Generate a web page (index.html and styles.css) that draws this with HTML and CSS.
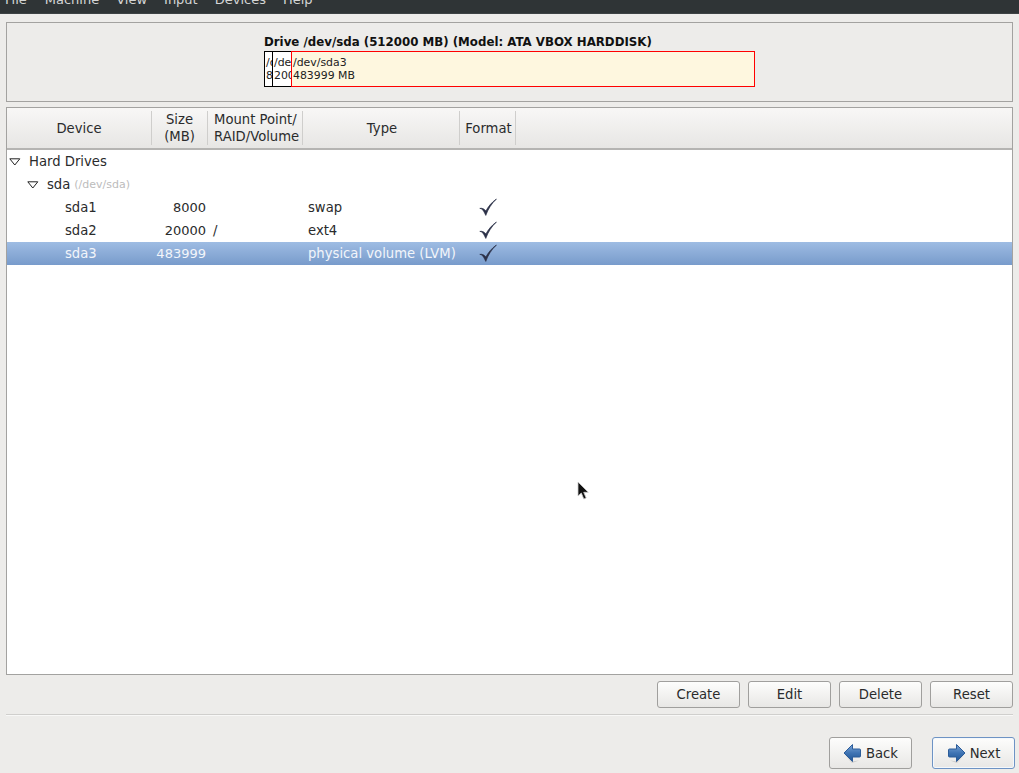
FILE: index.html
```html
<!DOCTYPE html>
<html lang="en">
<head>
<meta charset="utf-8">
<title>Partitioning</title>
<link rel="stylesheet" href="styles.css">
</head>
<body>
<svg class="defs" width="0" height="0" aria-hidden="true">
  <defs>
    <linearGradient id="arrowFill" x1="0" y1="0" x2="0" y2="1">
      <stop offset="0" stop-color="#7ba4d6"/>
      <stop offset="0.5" stop-color="#3f74b4"/>
      <stop offset="1" stop-color="#1f5596"/>
    </linearGradient>
    <symbol id="check" viewBox="0 0 18 18">
      <path d="M.8 10.400 C2.800 10.400 4.400 12.200 5.600 15 L6.800 17.400 C9 11.200 12.600 5.400 17.400 1 C12.600 4.400 9.200 8.600 6.900 13 C5.600 11.200 3.400 9.800 .8 10.400 Z" fill="#2b3048" stroke="#2b3048" stroke-width=".7"/>
    </symbol>
  </defs>
</svg>
<header class="menubar">
  <span class="menu m-file">File</span>
  <span class="menu m-machine">Machine</span>
  <span class="menu m-view">View</span>
  <span class="menu m-input">Input</span>
  <span class="menu m-devices">Devices</span>
  <span class="menu m-help">Help</span>
</header>
<main class="window">
  <section class="drive-panel">
    <div class="drive">
      <div class="drive-title">Drive /dev/sda (512000 MB) (Model: ATA VBOX HARDDISK)</div>
      <div class="drive-bar">
        <div class="seg seg-a">/dev/sda1<br>8000 MB</div>
        <div class="seg seg-b">/dev/sda2<br>20000 MB</div>
        <div class="seg seg-c">/dev/sda3<br>483999 MB</div>
      </div>
    </div>
  </section>
  <section class="tree">
    <div class="thead">
      <div class="th">Device</div>
      <div class="th">Size<br>(MB)</div>
      <div class="th th-left">Mount Point/<br>RAID/Volume</div>
      <div class="th th-shift">Type</div>
      <div class="th th-shift">Format</div>
      <div class="th th-fill"></div>
    </div>
    <div class="row">
      <div class="cell cell-device lvl0"><svg class="tri" width="12" height="8" viewBox="0 0 12 8"><path d="M.8.8h10L5.8 7z" fill="#fff" stroke="#222" stroke-width="1"/></svg>Hard Drives</div>
    </div>
    <div class="row">
      <div class="cell cell-device lvl1"><svg class="tri" width="12" height="8" viewBox="0 0 12 8"><path d="M.8.8h10L5.8 7z" fill="#fff" stroke="#222" stroke-width="1"/></svg>sda <small class="path">(/dev/sda)</small></div>
    </div>
    <div class="row">
      <div class="cell cell-device lvl2">sda1</div>
      <div class="cell cell-size">8000</div>
      <div class="cell cell-mount"></div>
      <div class="cell cell-type">swap</div>
      <div class="cell cell-format"><svg class="check"><use href="#check"/></svg></div>
    </div>
    <div class="row">
      <div class="cell cell-device lvl2">sda2</div>
      <div class="cell cell-size">20000</div>
      <div class="cell cell-mount">/</div>
      <div class="cell cell-type">ext4</div>
      <div class="cell cell-format"><svg class="check"><use href="#check"/></svg></div>
    </div>
    <div class="row selected">
      <div class="cell cell-device lvl2">sda3</div>
      <div class="cell cell-size">483999</div>
      <div class="cell cell-mount"></div>
      <div class="cell cell-type">physical volume (LVM)</div>
      <div class="cell cell-format"><svg class="check"><use href="#check"/></svg></div>
    </div>
  </section>
  <div class="actions">
    <button class="btn">Create</button>
    <button class="btn">Edit</button>
    <button class="btn">Delete</button>
    <button class="btn">Reset</button>
  </div>
  <hr class="separator">
  <nav class="nav">
    <button class="btn btn-nav">
      <svg width="19" height="21" viewBox="0 0 19 21"><path d="M1 11 9 18.500 16 17.500 9 20z" fill="#bdbcba" opacity=".7"/><path d="M1 10 9.500 1.500v4.500h7a1 1 0 0 1 1 1v6a1 1 0 0 1-1 1h-7v4.500z" fill="url(#arrowFill)" stroke="#2c5c99" stroke-width="1"/></svg>
      Back
    </button>
    <button class="btn btn-nav btn-focus">
      <svg width="19" height="21" viewBox="0 0 19 21"><path d="M18 11 10 18.500 3 17.500 10 20z" fill="#bdbcba" opacity=".7"/><path d="M18 10 9.500 1.500v4.500h-7a1 1 0 0 0-1 1v6a1 1 0 0 0 1 1h7v4.500z" fill="url(#arrowFill)" stroke="#2c5c99" stroke-width="1"/></svg>
      Next
    </button>
  </nav>
</main>
<svg class="cursor" width="14" height="20" viewBox="0 0 14 20" aria-hidden="true"><path d="M1 1v14l3.300-3 2.500 6 2.400-1-2.500-5.700h4.600z" fill="#111" stroke="#ccc" stroke-width=".8"/></svg>
</body>
</html>
```

FILE: styles.css
```css
* { box-sizing: border-box; }
html, body { margin: 0; height: 100%; }
body {
  position: relative;
  width: 1019px;
  height: 773px;
  overflow: hidden;
  background: #edecea;
  color: #2a2b2c;
  font-family: "DejaVu Sans", sans-serif;
  font-size: 13.200px;
}
.defs { position: absolute; }

.menubar {
  display: flex;
  align-items: flex-start;
  height: 14px;
  overflow: hidden;
  background: #2f3436;
  border-bottom: 1px solid #3d4244;
  color: #d4d5d5;
  font-size: 13px;
  line-height: 16px;
}
.menu { display: block; margin-top: -8px; }
.m-file { margin-left: 5px; }
.m-machine { margin-left: 18px; }
.m-view { margin-left: 17px; }
.m-input { margin-left: 17px; }
.m-devices { margin-left: 17px; }
.m-help { margin-left: 17px; }

.window {
  display: flex;
  flex-direction: column;
  height: 759px;
  padding: 8px 6px 0;
}

.drive-panel {
  display: flex;
  height: 80px;
  padding-left: 257px;
  border: 1px solid #a3a2a0;
}
.drive { width: 491px; padding-top: 11px; }
.drive-title {
  color: #111;
  font-size: 11.800px;
  font-weight: 700;
  line-height: 16px;
  white-space: nowrap;
}
.drive-bar {
  display: flex;
  height: 36px;
  margin-top: 1px;
  color: #222;
  font-size: 10.900px;
  line-height: 13px;
}
.seg {
  overflow: hidden;
  padding: 4px 0 0 1px;
  border: 1px solid #000;
  white-space: nowrap;
  background: #fff;
}
.seg-a { width: 9px; }
.seg-b { width: 20px; margin-left: -1px; }
.seg-c {
  flex: 1;
  margin-left: -1px;
  border-color: #f00;
  background: #fef7df;
}

.tree {
  display: flex;
  flex-direction: column;
  height: 568px;
  margin-top: 5px;
  background: #fff;
  border: 1px solid #a3a2a0;
}
.thead {
  display: grid;
  grid-template-columns: 145px 56px 95px 157px 56px 1fr;
  height: 42px;
  padding: 3px 0 4px;
  background: linear-gradient(#f8f7f6, #e7e6e4);
  border-bottom: 2px solid #b5b4b2;
  line-height: 17px;
  text-align: center;
}
.th {
  display: flex;
  align-items: center;
  justify-content: center;
  border-right: 1px solid #cfcecc;
}
.th-left { justify-content: flex-start; padding-left: 6px; text-align: left; }
.th-shift { padding-left: 2px; }
.th-fill { border-right: 0; }

.row {
  display: grid;
  grid-template-columns: 145px 56px 95px 157px 56px 1fr;
  height: 23px;
  align-items: center;
  line-height: 23px;
  white-space: nowrap;
}
.row.selected {
  background: linear-gradient(#9ebce3, #789bcb);
  color: #f2f5fa;
}
.cell { display: flex; align-items: center; height: 23px; }
.lvl0 { padding-left: 2px; gap: 8px; grid-column: 1 / 4; }
.lvl1 { padding-left: 20px; gap: 8px; grid-column: 1 / 4; }
.lvl2 { padding-left: 58px; }
.cell-size { justify-content: flex-end; padding-right: 2px; font-size: 13px; }
.cell-mount { padding-left: 5px; }
.cell-type { padding-left: 5px; }
.cell-format { justify-content: center; }
.path { margin-left: -4px; color: #bcbcbc; font-size: 11px; }
.tri { flex: none; }
.check { display: block; width: 18px; height: 18px; margin-top: -1px; }

.actions {
  display: flex;
  justify-content: flex-end;
  gap: 8px;
  margin-top: 6px;
}
.btn {
  width: 83px;
  height: 27px;
  padding: 0;
  border: 1px solid #a09f9d;
  border-radius: 3px;
  background: linear-gradient(#fdfdfc, #e8e7e5);
  color: #2a2b2c;
  font-family: inherit;
  font-size: 13.200px;
}
.separator {
  width: 100%;
  height: 2px;
  margin: 6px 0 0;
  border: 0;
  border-top: 1px solid #d0cfcd;
  border-bottom: 1px solid #f8f8f7;
}
.nav {
  display: flex;
  justify-content: flex-end;
  gap: 20px;
  margin: 21px -2px 0 0;
}
.btn-nav {
  display: flex;
  align-items: center;
  justify-content: center;
  gap: 4px;
  height: 32px;
}
.btn-focus { border-color: #6e93c4; box-shadow: inset 0 0 0 1px #f4f8fc; }

.cursor { position: absolute; left: 577px; top: 481px; }
```
